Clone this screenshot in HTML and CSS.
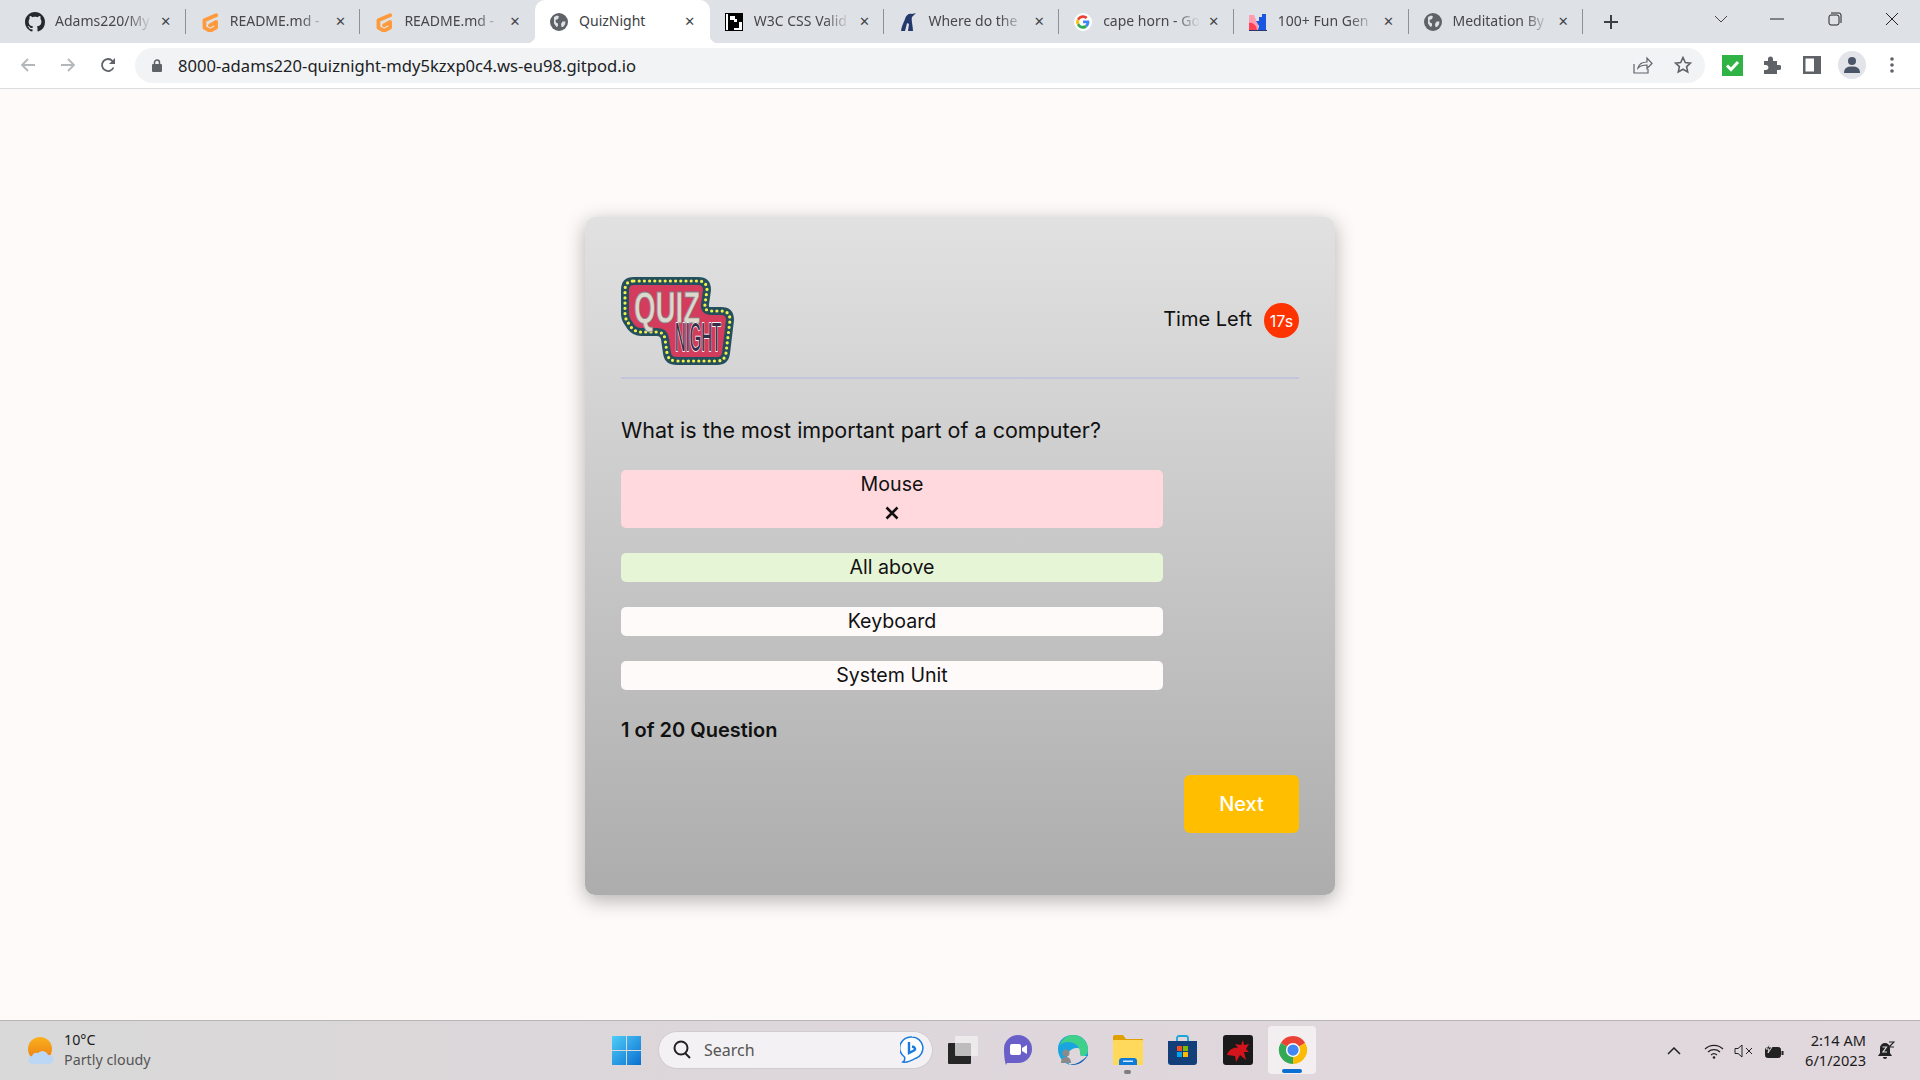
FILE: index.html
```html
<!DOCTYPE html>
<html lang="en">
<head>
	<meta charset="UTF-8">
	<title>QuizNight</title>
	<link rel="stylesheet" href="styles.css">
</head>
<body>
	<div id="window">
		<div id="tabbar">
			<div id="tabs">
				<div class="tab">
					<svg class="fav big" viewBox="0 0 16 16"><path fill="#24292f" d="M8 0C3.58 0 0 3.58 0 8c0 3.54 2.29 6.53 5.47 7.59.4.07.55-.17.55-.38 0-.19-.01-.82-.01-1.49-2.01.37-2.53-.49-2.69-.94-.09-.23-.48-.94-.82-1.13-.28-.15-.68-.52-.01-.53.63-.01 1.08.58 1.23.82.72 1.21 1.87.87 2.33.66.07-.52.28-.87.51-1.07-1.78-.2-3.64-.89-3.64-3.95 0-.87.31-1.59.82-2.15-.08-.2-.36-1.02.08-2.12 0 0 .67-.21 2.2.82.64-.18 1.32-.27 2-.27.68 0 1.36.09 2 .27 1.53-1.04 2.2-.82 2.2-.82.44 1.1.16 1.92.08 2.12.51.56.82 1.27.82 2.15 0 3.07-1.87 3.75-3.65 3.95.29.25.54.73.54 1.48 0 1.07-.01 1.93-.01 2.2 0 .21.15.46.55.38A8.013 8.013 0 0016 8c0-4.42-3.58-8-8-8z"/></svg>
					<span class="title">Adams220/My</span>
					<span class="close">&#10005;</span>
				</div>
				<div class="tab">
					<svg class="fav big" viewBox="0 0 18 18"><path fill="none" stroke="#ff9a3c" stroke-width="3.400" stroke-linejoin="round" stroke-linecap="round" d="M14.500 3L4 7.500V14l5 3 5.500-3V9L9 12"/></svg>
					<span class="title">README.md -</span>
					<span class="close">&#10005;</span>
				</div>
				<div class="tab before-active">
					<svg class="fav big" viewBox="0 0 18 18"><path fill="none" stroke="#ff9a3c" stroke-width="3.400" stroke-linejoin="round" stroke-linecap="round" d="M14.500 3L4 7.500V14l5 3 5.500-3V9L9 12"/></svg>
					<span class="title">README.md -</span>
					<span class="close">&#10005;</span>
				</div>
				<div class="tab active">
					<svg class="fav" viewBox="0 0 18 18"><circle cx="9" cy="9" r="9" fill="#5f6368"/><path fill="#dee1e6" d="M4 4l3-1.500 2 1-1 2.500-2.500 1 .5 2.500 2 1v2.500l-1.500 1-2.500-3.500zM12.500 8.500h3l-.5 3-2 2.500-1.500 0-.5-3z"/></svg>
					<span class="title">QuizNight</span>
					<span class="close">&#10005;</span>
				</div>
				<div class="tab">
					<svg class="fav" viewBox="0 0 18 18"><rect width="18" height="18" fill="#000"/><path fill="#fff" d="M1 1h2v16H1zM5 3h5v3h2v3H9V7H5zM14 9h3v8h-8v-2h5z"/></svg>
					<span class="title">W3C CSS Valid</span>
					<span class="close">&#10005;</span>
				</div>
				<div class="tab">
					<svg class="fav" viewBox="0 0 18 18"><path fill="#24386b" d="M2 18C3 12 5 9 6 6 7 2 10 0 13 1l4-1-4 4c-1 3 1 9 1 14H9l1-7-2-1-2 8z"/></svg>
					<span class="title">Where do the</span>
					<span class="close">&#10005;</span>
				</div>
				<div class="tab">
					<svg class="fav" viewBox="0 0 48 48"><circle cx="24" cy="24" r="24" fill="#fff"/><path fill="#ea4335" d="M24 13c3 0 5 1 7 3l5-5c-3-3-7-5-12-5-7 0-13 4-16 10l6 4c1-4 5-7 10-7z"/><path fill="#4285f4" d="M41 24c0-1 0-3-1-4H24v7h9c0 2-2 4-4 5l6 5c4-3 6-8 6-13z"/><path fill="#fbbc05" d="M14 27c-1-2-1-4 0-6l-6-5c-3 5-3 11 0 16z"/><path fill="#34a853" d="M24 42c5 0 9-2 11-5l-6-5c-1 1-3 2-5 2-5 0-9-3-10-7l-6 5c3 6 9 10 16 10z"/></svg>
					<span class="title">cape horn - Go</span>
					<span class="close">&#10005;</span>
				</div>
				<div class="tab">
					<svg class="fav" viewBox="0 0 18 18"><path fill="#ff9eb0" d="M0 2h5l4 10v5H0z"/><path fill="#ff4056" d="M0 10c3-1 7 1 8 7H0z"/><path fill="#1a56e0" d="M7 8h3V4h3V1h4v16h-8l1-4z"/><rect y="17" width="18" height="1" fill="#24386b"/></svg>
					<span class="title">100+ Fun Gen</span>
					<span class="close">&#10005;</span>
				</div>
				<div class="tab">
					<svg class="fav" viewBox="0 0 18 18"><circle cx="9" cy="9" r="9" fill="#5f6368"/><path fill="#dee1e6" d="M4 4l3-1.500 2 1-1 2.500-2.500 1 .5 2.500 2 1v2.500l-1.500 1-2.500-3.500zM12.500 8.500h3l-.5 3-2 2.500-1.500 0-.5-3z"/></svg>
					<span class="title">Meditation By</span>
					<span class="close">&#10005;</span>
				</div>
			</div>
			<div id="newtab">
				<svg width="16" height="16" viewBox="0 0 16 16"><path stroke="#3c4043" stroke-width="2" d="M8 1v14M1 8h14"/></svg>
			</div>
			<div id="winctrl">
				<span class="ctrl"><svg width="14" height="8" viewBox="0 0 14 8"><path fill="none" stroke="#444" d="M1 1l6 6 6-6"/></svg></span>
				<span class="ctrl min"><svg width="14" height="2" viewBox="0 0 14 2"><path stroke="#222" d="M0 1h14"/></svg></span>
				<span class="ctrl"><svg width="14" height="14" viewBox="0 0 14 14"><rect x="1" y="3" width="10" height="10" rx="2" fill="none" stroke="#222"/><path fill="none" stroke="#222" d="M3 1h8a2 2 0 0 1 2 2v8"/></svg></span>
				<span class="ctrl"><svg width="14" height="14" viewBox="0 0 14 14"><path stroke="#222" d="M1 1l12 12M13 1L1 13"/></svg></span>
			</div>
		</div>

		<div id="toolbar">
			<span class="tool"><svg width="16" height="16" viewBox="0 0 16 16"><path fill="none" stroke="#b4b7ba" stroke-width="1.800" d="M15 8H2M8 2L2 8l6 6"/></svg></span>
			<span class="tool"><svg width="16" height="16" viewBox="0 0 16 16"><path fill="none" stroke="#b4b7ba" stroke-width="1.800" d="M1 8h13M8 2l6 6-6 6"/></svg></span>
			<span class="tool"><svg width="16" height="16" viewBox="0 0 16 16"><path fill="none" stroke="#5f6368" stroke-width="1.800" d="M13.500 10.500A6 6 0 1 1 12.500 4"/><path fill="#5f6368" d="M15 1v6H9z"/></svg></span>
			<div id="address">
				<svg class="lock" width="10" height="13" viewBox="0 0 10 13"><path fill="#5f6368" d="M1 5h8a1 1 0 0 1 1 1v6a1 1 0 0 1-1 1H1a1 1 0 0 1-1-1V6a1 1 0 0 1 1-1z"/><path fill="none" stroke="#5f6368" stroke-width="1.500" d="M2.500 5V3.500a2.500 2.500 0 0 1 5 0V5"/></svg>
				<span id="url">8000-adams220-quiznight-mdy5kzxp0c4.ws-eu98.gitpod.io</span>
				<span class="tool"><svg width="20" height="18" viewBox="0 0 20 18"><path fill="none" stroke="#5f6368" stroke-width="1.200" d="M1 8v9h14v-4M5 12c1-4 5-6 9-6V2l5 5.500-5 5V9c-4 0-7 1-9 3z"/></svg></span>
				<span class="tool"><svg width="18" height="18" viewBox="0 0 18 18"><path fill="none" stroke="#5f6368" stroke-width="1.600" d="M9 1.500l2.300 5 5.200.6-3.900 3.500 1.100 5.300L9 13.200l-4.700 2.700 1.100-5.300L1.500 7.100l5.200-.6z"/></svg></span>
			</div>
			<span class="tool"><svg width="21" height="21" viewBox="0 0 21 21"><rect width="21" height="21" fill="#2fb344"/><path fill="none" stroke="#fff" stroke-width="3" d="M5 10.500l4 4 7-7.500"/></svg></span>
			<span class="tool"><svg width="18" height="18" viewBox="0 0 18 18"><path fill="#5f6368" d="M1 5h4V3a2.500 2.500 0 0 1 5 0v2h4v4h2a2.500 2.500 0 0 1 0 5h-2v4H1v-4h2a2 2 0 0 0 0-5H1z"/></svg></span>
			<span class="tool"><svg width="18" height="18" viewBox="0 0 18 18"><path fill="#5f6368" d="M0 0h18v18H0z"/><path fill="#fff" d="M2.500 2.500H11v13H2.500z"/></svg></span>
			<span class="tool"><span class="avatar"><svg width="18" height="18" viewBox="0 0 18 18"><circle cx="9" cy="5" r="4" fill="#4a5568"/><path fill="#4a5568" d="M1 17c0-5 3-6.500 8-6.500s8 1.500 8 6.500z"/></svg></span></span>
			<span class="tool"><svg width="4" height="18" viewBox="0 0 4 18"><circle cx="2" cy="3" r="1.800" fill="#5f6368"/><circle cx="2" cy="9" r="1.800" fill="#5f6368"/><circle cx="2" cy="15" r="1.800" fill="#5f6368"/></svg></span>
		</div>

		<div id="page">
			<div id="card">
				<div id="head">
					<svg id="logo" viewBox="0 0 113 88">
						<path class="logo-base" d="M13 4H77Q86 4 86 13L84 27Q83 34 90 34H100Q109 34 109 43L105 76Q104 84 96 84H56Q47 84 46 76L44 62Q43 55 36 55H20Q14 55 10 50L6 44Q4 41 4 36V13Q4 4 13 4Z"/>
						<path class="logo-dots" d="M13 4H77Q86 4 86 13L84 27Q83 34 90 34H100Q109 34 109 43L105 76Q104 84 96 84H56Q47 84 46 76L44 62Q43 55 36 55H20Q14 55 10 50L6 44Q4 41 4 36V13Q4 4 13 4Z"/>
						<text class="logo-quiz" transform="translate(13 46) scale(.63 1)">QUIZ</text>
						<text class="logo-night" transform="translate(54 74) scale(.36 1)">NIGHT</text>
					</svg>
					<div id="timer">
						<span id="left">Time Left</span>
						<span id="sec">17s</span>
					</div>
				</div>
				<div id="question">What is the most important part of a computer?</div>
				<ul id="options">
					<li class="wrong">Mouse<svg class="cross" width="14" height="14" viewBox="0 0 14 14"><path stroke="#111" stroke-width="2.600" d="M1.500 1.500l11 11M12.500 1.500l-11 11"/></svg></li>
					<li class="right">All above</li>
					<li>Keyboard</li>
					<li>System Unit</li>
				</ul>
				<div id="count">1 of 20 Question</div>
				<div id="foot"><button id="next">Next</button></div>
			</div>
		</div>

		<div id="taskbar">
			<div id="weather">
				<svg width="28" height="28" viewBox="0 0 28 28"><defs><linearGradient id="sun" x1="0" y1="0" x2="0" y2="1"><stop offset="0" stop-color="#f9b11c"/><stop offset="1" stop-color="#ee7c16"/></linearGradient></defs><circle cx="13" cy="12" r="12" fill="url(#sun)"/><path fill="#bcd7f5" d="M6 27a4 4 0 0 1-1-8 5 5 0 0 1 6-3 6 6 0 0 1 10 2 4.500 4.500 0 0 1 2 9z"/></svg>
				<div id="wtext">
					<div>10°C</div>
					<div class="sub">Partly cloudy</div>
				</div>
			</div>
			<div id="apps">
				<svg id="start" width="29" height="29" viewBox="0 0 29 29"><defs><linearGradient id="win" x1="0" y1="0" x2="1" y2="1"><stop offset="0" stop-color="#4fcdf8"/><stop offset="1" stop-color="#0a6fd0"/></linearGradient></defs><path fill="url(#win)" d="M0 0h14v14H0zM15 0h14v14H15zM0 15h14v14H0zM15 15h14v14H15z"/></svg>
				<div id="search">
					<svg width="20" height="20" viewBox="0 0 20 20"><circle cx="9" cy="8" r="6.500" fill="none" stroke="#222" stroke-width="2"/><path stroke="#222" stroke-width="2" d="M13 13l5 5"/></svg>
					<span>Search</span>
					<svg class="bing" width="24" height="28" viewBox="0 0 24 28"><path fill="#fff" stroke="#1a7ae0" stroke-width="1.500" d="M12 1a11 11 0 0 1 4 21.200C11 25 6 27 3 26c2-1 2-3 1.500-5A11 11 0 0 1 12 1z"/><path fill="none" stroke="#1a7ae0" stroke-width="2.400" d="M9 6v11l5-2.500c2-1 1-3.500-2-4"/></svg>
				</div>
				<span class="app"><svg width="30" height="28" viewBox="0 0 30 28"><rect y="7" width="23" height="21" rx="1" fill="#262626"/><rect x="7" width="23" height="20" rx="1" fill="#f2f0f2" fill-opacity=".75"/></svg></span>
				<span class="app"><svg width="28" height="30" viewBox="0 0 28 30"><path fill="#6a5fc8" d="M14 0a14 14 0 0 1 0 28H3l-1 2c-1-3-2-8-2-16A14 14 0 0 1 14 0z"/><rect x="6" y="9" width="11" height="11" rx="2" fill="#fff"/><path fill="#fff" d="M18 13l5-3v9l-5-3z"/></svg></span>
				<span class="app"><svg width="30" height="30" viewBox="0 0 30 30"><path fill="#1aa5e0" d="M15 0C6 0 0 6 0 14c0 8 5 14 12 16C8 26 8 18 13 15c4-3 10-2 12 0 3 3 1 6 1 6h4v-6C30 6 24 0 15 0z"/><path fill="#3fd08a" d="M15 0c8 0 15 6 15 15 0 4-3 6-6 6-2 0-2-1-2-3C22 12 18 7 10 7 7 7 4 8 2 10 4 4 9 0 15 0z"/><path fill="#0f5cb8" d="M30 20c-3 6-9 10-15 10-1 0-2 0-3-.5 6 0 12-3 18-9.500z"/><circle cx="8" cy="18" r="3.500" fill="#8a8a8a"/><path fill="#8a8a8a" d="M3 28c0-4 2-6 5-6s5 2 5 6z"/></svg></span>
				<span class="app has-dot"><svg width="30" height="30" viewBox="0 0 30 30"><path fill="#e0a100" d="M0 2a2 2 0 0 1 2-2h8l3 4h17v4H0z"/><rect y="5" width="30" height="25" rx="1" fill="#ffd95c"/><path fill="#0f7ad8" d="M6 26a3 3 0 0 1 3-3h12a3 3 0 0 1 3 3v4H6z"/><rect x="10" y="25.500" width="10" height="1.500" fill="#cfe8fb"/></svg></span>
				<span class="app"><svg width="29" height="30" viewBox="0 0 29 30"><path fill="none" stroke="#1aa7d8" stroke-width="1.800" d="M9 6V3a2 2 0 0 1 2-2h7a2 2 0 0 1 2 2v3"/><path fill="#123f7a" d="M0 6h29v21a3 3 0 0 1-3 3H3a3 3 0 0 1-3-3z"/><path fill="#f25022" d="M9 11h5v5H9z"/><path fill="#7fba00" d="M15 11h5v5h-5z"/><path fill="#00a4ef" d="M9 17h5v5H9z"/><path fill="#ffb900" d="M15 17h5v5h-5z"/></svg></span>
				<span class="app"><svg width="30" height="30" viewBox="0 0 30 30"><rect width="30" height="30" rx="3" fill="#1a1a1a"/><path fill="#d3141d" d="M4 20c2-6 7-8 11-7l-3-4 6 1 2-5 1 5 5-1-3 5 3 3-5 0 2 8-6-5-4 7-1-6z"/></svg></span>
				<span class="app current"><svg width="30" height="30" viewBox="0 0 32 32"><path fill="#ea4335" d="M3 8.500A15 15 0 0 1 29 8.500L16 16z"/><path fill="#fbbc05" d="M29 8.500A15 15 0 0 1 16 31L16 16z"/><path fill="#34a853" d="M16 31A15 15 0 0 1 3 8.500L16 16z"/><circle cx="16" cy="16" r="7.500" fill="#fff"/><circle cx="16" cy="16" r="6" fill="#4285f4"/></svg></span>
			</div>
			<div id="tray">
				<span class="tray-icon up"><svg width="14" height="8" viewBox="0 0 14 8"><path fill="none" stroke="#222" stroke-width="1.500" d="M1 7l6-6 6 6"/></svg></span>
				<span class="tray-icon"><svg width="20" height="16" viewBox="0 0 20 16"><g fill="none" stroke="#222" stroke-width="1.200"><path d="M1 6a13 13 0 0 1 18 0"/><path d="M4 9a9 9 0 0 1 12 0"/><path d="M7 12a4.500 4.500 0 0 1 6 0"/></g><circle cx="10" cy="14.500" r="1.300" fill="#222"/></svg></span>
				<span class="tray-icon"><svg width="20" height="14" viewBox="0 0 20 14"><path fill="none" stroke="#222" d="M1 4.500h3L8 1v12L4 9.500H1zM12 4l6 6M18 4l-6 6"/></svg></span>
				<span class="tray-icon"><svg width="20" height="16" viewBox="0 0 20 16"><rect x="1.500" y="4.500" width="15" height="10" rx="2" fill="#222" stroke="#222"/><rect x="17.500" y="8" width="2" height="4" fill="#222"/><path fill="#222" stroke="#e0d9dd" d="M6 0L2 6h3l-1 4 4-6H5z"/></svg></span>
				<div id="clock">
					<div>2:14 AM</div>
					<div>6/1/2023</div>
				</div>
				<span class="tray-icon bell"><svg width="18" height="20" viewBox="0 0 18 20"><path fill="#222" d="M8 2a5 5 0 0 1 5 5v5l2 3H1l2-3V7a5 5 0 0 1 5-5zM6 16h4a2 2 0 0 1-4 0z"/><path fill="none" stroke="#e0d9dd" stroke-width="1.200" d="M5.500 6h4L6 11h4"/><path fill="none" stroke="#222" stroke-width="1.200" d="M12 1h5l-5 5h5"/></svg></span>
			</div>
		</div>
	</div>
</body>
</html>
```

FILE: styles.css
```css
*{
	margin: 0;
	padding: 0;
	box-sizing: border-box;
}
ul, ol{
	list-style: none;
}
body{
	font-family: "Noto Sans", "Open Sans", sans-serif;
	background: #fffafa;
	overflow: hidden;
}
#window{
	width: 1920px;
	height: 1080px;
	display: flex;
	flex-direction: column;
}

/* tab strip */
#tabbar{
	height: 43px;
	background: #dee1e6;
	display: flex;
	flex: none;
}
#tabs{
	display: flex;
	padding-left: 11px;
}
.tab{
	width: 174.7px;
	height: 43px;
	display: flex;
	align-items: center;
	padding: 0 13px 0 15px;
	position: relative;
	font-size: 14px;
	color: #45474a;
}
.tab::after{
	content: "";
	position: absolute;
	right: 0;
	top: 9px;
	width: 1px;
	height: 25px;
	background: #8e9196;
}
.tab.before-active::after{
	display: none;
}
.tab.active{
	background: #fff;
	border-radius: 10px 10px 0 0;
	color: #3c4043;
}
.tab.active::before{
	content: "";
	position: absolute;
	left: -8px;
	bottom: 0;
	width: 8px;
	height: 8px;
	background: radial-gradient(circle at 0 0, transparent 8px, #fff 8.5px);
}
.tab.active::after{
	right: -8px;
	top: auto;
	bottom: 0;
	width: 8px;
	height: 8px;
	background: radial-gradient(circle at 100% 0, transparent 8px, #fff 8.5px);
}
.fav{
	width: 18px;
	height: 18px;
	flex: none;
	margin-right: 11px;
}
.fav.big{
	width: 20px;
	height: 20px;
	margin: 0 10px 0 -1px;
}
.title{
	flex: 1;
	min-width: 0;
	padding-bottom: 2px;
	white-space: nowrap;
	-webkit-mask-image: linear-gradient(90deg, #000 72%, transparent 98%);
	mask-image: linear-gradient(90deg, #000 72%, transparent 98%);
}
.tab.active .title{
	-webkit-mask-image: none;
	mask-image: none;
}
.close{
	width: 14px;
	flex: none;
	margin-left: 5px;
	font-size: 13px;
	font-family: "DejaVu Sans", sans-serif;
	font-weight: bold;
	color: #45474a;
	text-align: center;
}
#newtab{
	width: 30px;
	margin-left: 13px;
	display: flex;
	align-items: center;
	justify-content: center;
}
#winctrl{
	margin-left: auto;
	display: flex;
}
.ctrl{
	width: 57px;
	height: 38px;
	display: flex;
	align-items: center;
	justify-content: center;
}
.ctrl.min{
	padding-right: 2px;
}

/* address row */
#toolbar{
	height: 46px;
	flex: none;
	background: #fff;
	border-bottom: 1px solid #dadce0;
	display: flex;
	align-items: center;
	padding: 0 8px 1px 8px;
}
.tool{
	width: 40px;
	height: 35px;
	flex: none;
	display: flex;
	align-items: center;
	justify-content: center;
}
#address{
	flex: 1;
	height: 35px;
	margin: 0 7px;
	padding: 0 2px 0 17px;
	background: #f1f3f4;
	border-radius: 18px;
	display: flex;
	align-items: center;
}
#url{
	flex: 1;
	margin-left: 16px;
	font-size: 16.6px;
	color: #202124;
}
.avatar{
	width: 28px;
	height: 28px;
	border-radius: 50%;
	background: #e2e4e9;
	display: flex;
	align-items: center;
	justify-content: center;
}

/* quiz */
#page{
	flex: 1;
	padding-top: 128px;
	font-family: Inter, "Liberation Sans", sans-serif;
	color: #111;
}
#card{
	width: 750px;
	height: 678px;
	margin: 0 auto;
	padding: 60px 36px 0;
	border-radius: 10px;
	background: linear-gradient(180deg, #e1e1e1, #adadad);
	box-shadow: 0 5px 20px rgba(0, 0, 0, 0.3);
}
#head{
	height: 102px;
	border-bottom: 2px solid #c4c4de;
	display: flex;
	justify-content: space-between;
	align-items: flex-start;
}
#logo{
	width: 113px;
	height: 88px;
}
.logo-base{
	fill: #d33c5c;
	stroke: #24505e;
	stroke-width: 8px;
	stroke-linejoin: round;
}
.logo-dots{
	fill: none;
	stroke: #f4f04a;
	stroke-width: 3.2px;
	stroke-linecap: round;
	stroke-dasharray: 0 5.2;
}
.logo-quiz{
	font-family: "Liberation Sans", sans-serif;
	font-size: 44px;
	font-weight: bold;
	fill: #dcd8cc;
	stroke: #80858c;
	stroke-width: 0.8px;
}
.logo-night{
	font-family: "Liberation Sans", sans-serif;
	font-size: 41px;
	fill: #332e4a;
	stroke: #f1eef0;
	stroke-width: 2px;
	paint-order: stroke fill;
}
#timer{
	display: flex;
	align-items: center;
	gap: 12px;
	margin-top: 26px;
	font-size: 20px;
}
#left{
	padding-bottom: 3px;
}
#sec{
	width: 35px;
	height: 35px;
	border-radius: 50%;
	background: #ff3300;
	color: #fff;
	font-size: 16px;
	display: flex;
	align-items: center;
	justify-content: center;
}
#question{
	margin-top: 36px;
	font-size: 21.5px;
	line-height: 30px;
}
#options{
	width: 542px;
	margin-top: 25px;
	display: flex;
	flex-direction: column;
	gap: 25px;
}
#options li{
	min-height: 29px;
	background: #fffafa;
	border-radius: 5px;
	text-align: center;
	font-size: 19.6px;
	line-height: 29px;
}
#options .wrong{
	background: #ffd9dd;
	height: 58px;
}
#options .right{
	background: #e6f5d5;
}
.cross{
	display: block;
	margin: 7px auto 0;
}
#count{
	margin-top: 25px;
	font-size: 20px;
	font-weight: 600;
	line-height: 30px;
}
#foot{
	display: flex;
	justify-content: flex-end;
	margin-top: 30px;
}
#next{
	width: 115px;
	height: 58px;
	border: none;
	border-radius: 6px;
	background: #ffbf00;
	color: #fff;
	font-family: Inter, "Liberation Sans", sans-serif;
	font-size: 20px;
	font-weight: 500;
}

/* windows taskbar */
#taskbar{
	height: 60px;
	flex: none;
	border-top: 1px solid #b7b4b6;
	background: linear-gradient(90deg, #d9d9d9, #ddd6da 40%, #e1d8de);
	display: grid;
	grid-template-columns: 612px auto 1fr;
	align-items: center;
}
#weather{
	display: flex;
	align-items: center;
	padding-left: 27px;
	gap: 9px;
	font-size: 14.3px;
	line-height: 20px;
	color: #1b1b1b;
}
#wtext{
	margin-top: -2px;
}
#wtext .sub{
	color: #555;
}
#apps{
	display: flex;
	align-items: center;
	margin-top: -1px;
}
#start{
	margin-right: 17px;
}
#search{
	width: 275px;
	height: 38px;
	margin-right: 2px;
	padding: 0 8px 0 13px;
	background: #f3f1f3;
	border: 1px solid #cfcccf;
	border-radius: 19px;
	display: flex;
	align-items: center;
	font-size: 16px;
	color: #555;
}
#search span{
	flex: 1;
	margin-left: 12px;
}
.app{
	width: 55px;
	height: 48px;
	display: flex;
	align-items: center;
	justify-content: center;
	position: relative;
}
.app.has-dot::after{
	content: "";
	position: absolute;
	left: 24px;
	bottom: 0;
	width: 7px;
	height: 4px;
	border-radius: 2px;
	background: #7e7e7e;
}
.app.current::before{
	content: "";
	position: absolute;
	left: 3px;
	top: 0;
	width: 48px;
	height: 48px;
	border-radius: 4px;
	background: #f3eff1;
}
.app.current svg{
	position: relative;
}
.app.current::after{
	content: "";
	position: absolute;
	left: 17px;
	bottom: 1px;
	width: 20px;
	height: 4px;
	border-radius: 2px;
	background: #0a6fd0;
}
#tray{
	display: flex;
	align-items: center;
	justify-content: flex-end;
	padding-right: 19px;
}
.tray-icon{
	width: 30px;
	display: flex;
	justify-content: center;
}
.tray-icon.up{
	margin-right: 10px;
}
.tray-icon.bell{
	margin-left: 5px;
}
#clock{
	width: 77px;
	margin-top: -2px;
	text-align: right;
	font-size: 14.6px;
	line-height: 20px;
	color: #1b1b1b;
}
```
